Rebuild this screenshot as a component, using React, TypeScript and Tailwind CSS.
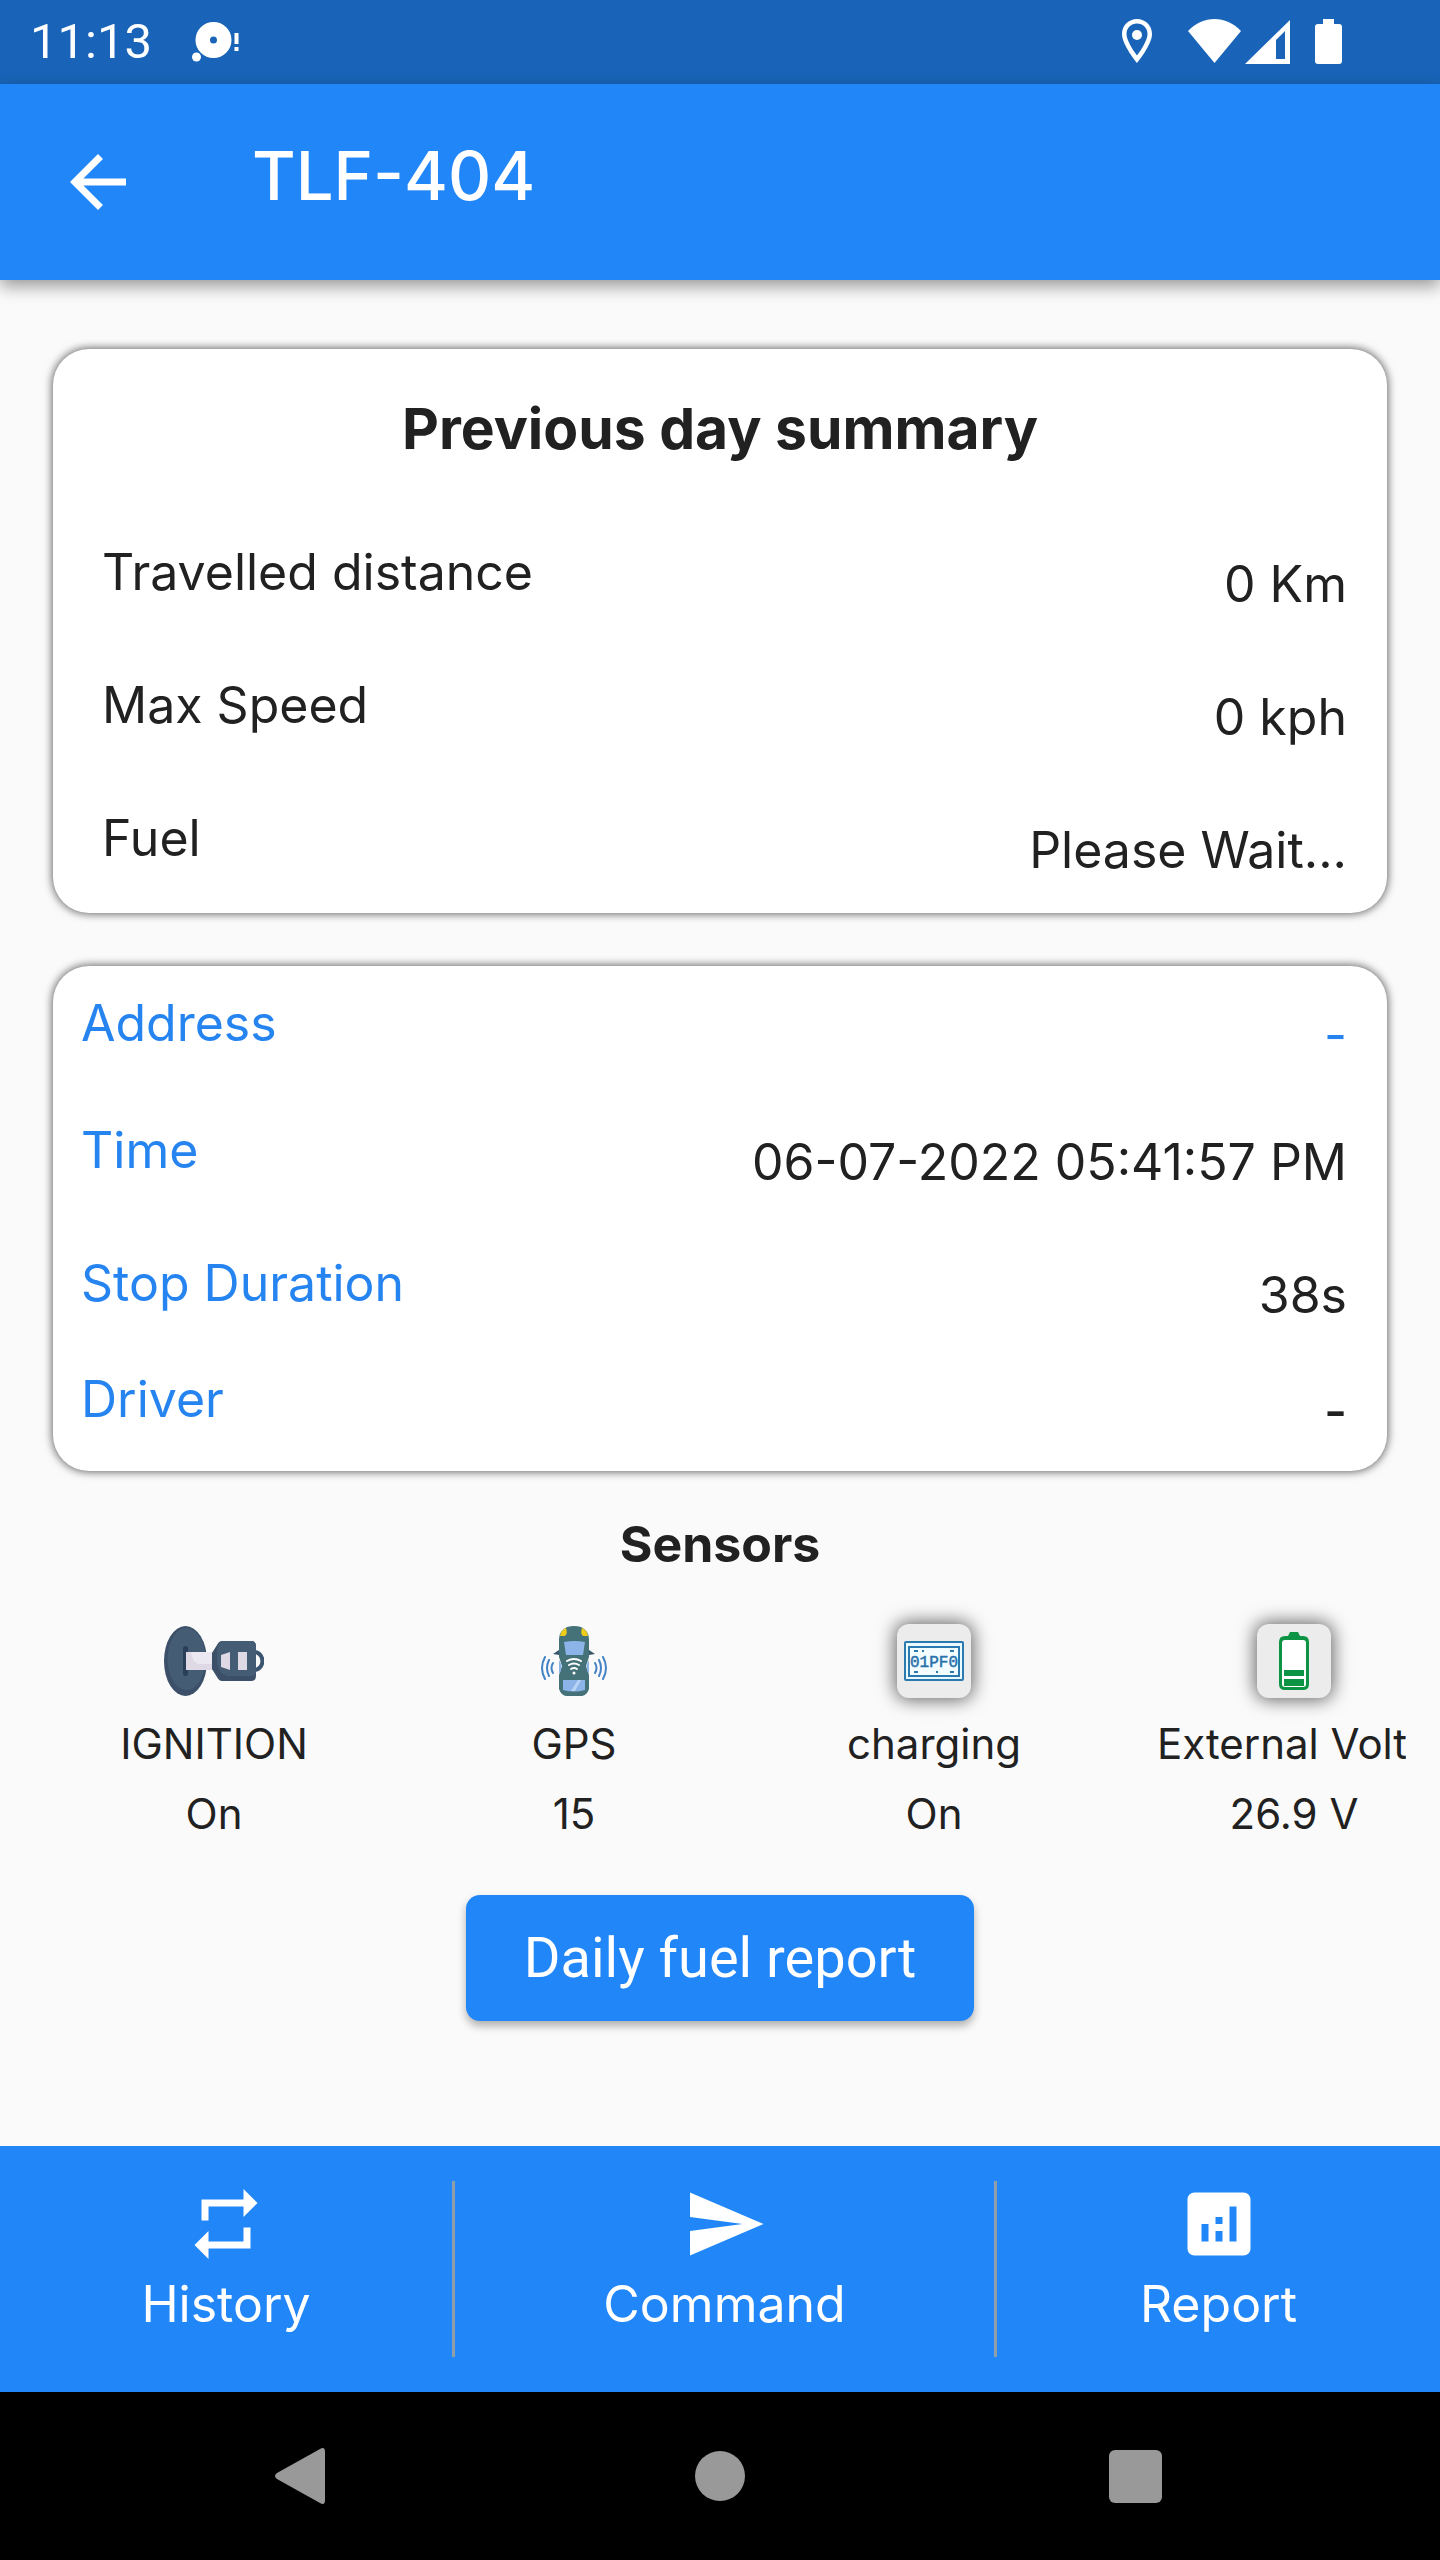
import type { ReactNode } from "react";
import { MdAnalytics, MdArrowBack, MdRepeat, MdSend } from "react-icons/md";

type RowProps = {
  label: string;
  value: string;
};

const summary: RowProps[] = [
  { label: "Travelled distance", value: "0 Km" },
  { label: "Max Speed", value: "0 kph" },
  { label: "Fuel", value: "Please Wait..." },
];

const Card = ({ children }: { children: ReactNode }) => (
  <section className="rounded-[36px] bg-white shadow-[0_0_8px_1px_rgba(0,0,0,0.6)]">
    {children}
  </section>
);

const StatusBar = () => (
  <div className="flex h-[84px] items-center justify-between bg-[#1964b8] pr-[98px] pl-[30px] text-white">
    <div className="flex items-center gap-10">
      <span className="font-[Roboto] text-[49px] leading-[60px]">11:13</span>
      <svg className="h-10 w-12" viewBox="0 0 48 40" fill="currentColor">
        <path
          fillRule="evenodd"
          d="M21.500 0a18 18 0 1 0 0 36a18 18 0 1 0 0-36zm0 14.500a3.500 3.500 0 1 1 0 7a3.500 3.500 0 1 1 0-7z"
        />
        <circle cx="4.500" cy="35" r="4.500" />
        <path d="M42.500 11h4v11h-4zM42.500 25h4v4h-4z" />
      </svg>
    </div>
    <svg className="h-[46px] w-[220px]" viewBox="0 0 220 46" fill="currentColor">
      <path
        fillRule="evenodd"
        d="M15 0C6.700 0 0 6.500 0 15c0 11 15 29 15 29s15-18 15-29C30 6.500 23.300 0 15 0zm0 4.500c6 0 10.500 4.500 10.500 10.500C25.500 21 19.500 30.500 15 36.500C10.500 30.500 4.500 21 4.500 15C4.500 9 9 4.500 15 4.500z"
      />
      <circle cx="15" cy="16" r="5" />
      <path d="M66 12C81-4 104-4 119 12L92.500 44z" />
      <path fillRule="evenodd" d="M168 1v44h-45zM163 12L154 21v19h9z" />
      <path d="M201 0h11v5h5a3 3 0 0 1 3 3v34a3 3 0 0 1-3 3h-21a3 3 0 0 1-3-3V8a3 3 0 0 1 3-3h5z" />
    </svg>
  </div>
);

const AppBar = () => (
  <header className="flex h-[196px] items-center bg-[#2186f7] pl-14 text-white shadow-[0_6px_16px_rgba(0,0,0,0.4)]">
    <button type="button" aria-label="Back">
      <MdArrowBack className="size-[84px]" />
    </button>
    <h1 className="ml-28 pb-3 text-[67px] leading-[84px] font-medium">TLF-404</h1>
  </header>
);

const IgnitionIcon = () => (
  <svg className="h-[70px] w-[100px]" viewBox="0 0 100 70">
    <ellipse cx="21.500" cy="35" rx="21.500" ry="35" fill="#3b5068" />
    <ellipse cx="22.500" cy="33" rx="19" ry="31" fill="#445c74" />
    <rect x="19" y="20" width="5" height="30" rx="2.500" fill="#2b3f59" />
    <path d="M22 26h28v18H22z" fill="#dfd9e6" />
    <path d="M27 26h23v12H34q-6-3-7-12z" fill="#ece8f1" />
    <path d="M90 26a8 8.500 0 0 1 0 18" fill="none" stroke="#3b5570" strokeWidth="4" />
    <path d="M58 15h29q5 0 5 5v30q0 5-5 5H58q-3 0-5-4l-5-8V27l5-8q2-4 5-4z" fill="#3b5068" />
    <path d="M59 15h28q5 0 5 5v26q0 4-5 4H63q-8-3-10-12V22q2-7 6-7z" fill="#445c74" />
    <path d="M57 29l9-3v18l-9-3zM74 26h9v18h-9z" fill="#dfd9e6" />
  </svg>
);

const GpsIcon = () => (
  <svg className="h-[70px] w-[68px]" viewBox="0 0 68 70">
    <path d="M13 28l6-4v5zM55 28l-6-4v5z" fill="#36586a" />
    <path
      d="M27 1q7-2 14 0q8 4 8 12v18l-3 9l3 9v14q-2 6-7 7H26q-5-1-7-7V49l3-9l-3-9V13q0-8 8-12z"
      fill="#457278"
    />
    <path d="M20 10q1-6 6-8q2 5-1 8zM48 10q-1-6-6-8q-2 5 1 8z" fill="#f0cc1a" />
    <path d="M24 16q10-2 21 0l-2 13H26zM23 54h22v10q-11 3-22 0z" fill="#8db4e8" />
    <path d="M31 65l7-11h3l-6 11z" fill="#b9d3f4" />
    <path d="M19 34q5 7 0 14zM49 34q-5 7 0 14z" fill="#8db4e8" />
    <g fill="none" strokeLinecap="round" strokeWidth="2">
      <path d="M27 35q7-4 14 0M29 39q5-3 10 0M31 43q3-2 6 0" stroke="#fff" />
      <path
        d="M5 31q-6 11 0 22M9 34q-4 8 0 16M13 37q-3 5 0 10M63 31q6 11 0 22M59 34q4 8 0 16M55 37q3 5 0 10"
        stroke="#4382c4"
      />
    </g>
    <circle cx="34" cy="47" r="1.500" fill="#fff" />
  </svg>
);

const IconTile = ({ children }: { children: ReactNode }) => (
  <div className="flex size-[74px] items-center justify-center rounded-xl bg-[#ececec] shadow-[0_0_18px_2px_rgba(0,0,0,0.6)]">
    {children}
  </div>
);

const PlateIcon = () => (
  <svg className="h-10 w-[60px]" viewBox="0 0 60 40">
    <rect x="1" y="1" width="58" height="38" rx="1" fill="#e9fbff" stroke="#2a7ab0" strokeWidth="2" />
    <rect x="5" y="6" width="50" height="29" fill="#f3fdff" stroke="#2a7ab0" strokeWidth="2" />
    <path d="M10 10h4M18 10h2M46 10h4M10 31h4M32 31h2M46 31h4" stroke="#2a7ab0" strokeWidth="2" />
    <text
      x="30"
      y="26"
      textAnchor="middle"
      fontFamily="Liberation Mono, monospace"
      fontSize="16"
      fill="#2a72ab"
      stroke="#2a72ab"
      strokeWidth="0.500"
    >
      01PF0
    </text>
  </svg>
);

const VoltIcon = () => (
  <svg className="h-[60px] w-[30px]" viewBox="0 0 30 60">
    <path d="M9 5l2-4h8l2 4h3q6 0 6 6v42q0 6-6 6H6q-6 0-6-6V11q0-6 6-6z" fill="#0c9444" />
    <rect x="3" y="9" width="24" height="47" rx="3" fill="#fff" />
    <path d="M5 39h20v6H5zM5 48h20v7H5z" fill="#0c9444" />
  </svg>
);

const sensors = [
  { label: "IGNITION", value: "On", icon: <IgnitionIcon /> },
  { label: "GPS", value: "15", icon: <GpsIcon /> },
  { label: "charging", value: "On", icon: <IconTile><PlateIcon /></IconTile> },
  { label: "External Volt", value: "26.9 V", icon: <IconTile><VoltIcon /></IconTile> },
];

const DetailRow = ({ label, children }: { label: string; children: ReactNode }) => (
  <div className="flex items-start justify-between">
    <dt className="text-[#2684f0]">{label}</dt>
    <dd className="pt-3">{children}</dd>
  </div>
);

const NavDivider = () => <div className="h-44 bg-[#8f9ea9]" />;

const NavButton = ({ label, icon }: { label: string; icon: ReactNode }) => (
  <button type="button" className="flex flex-col items-center gap-0.5 self-start pt-9 text-[50px] leading-[72px]">
    {icon}
    {label}
  </button>
);

export default function App() {
  return (
    <div className="flex min-h-screen flex-col bg-[#fafafa] font-[Inter,sans-serif] text-[#212121]">
      <StatusBar />
      <AppBar />

      <main className="flex flex-1 flex-col pt-[69px]">
        <div className="flex flex-col gap-[53px] px-[53px]">
          <Card>
            <h2 className="pt-10 text-center text-[57px] leading-[80px] font-bold">
              Previous day summary
            </h2>
            <dl className="mt-[67px] flex flex-col gap-[49px] pr-10 pb-[27px] pl-[49px] text-[50px] leading-[72px]">
              {summary.map((row) => (
                <div key={row.label} className="flex items-start justify-between">
                  <dt>{row.label}</dt>
                  <dd className="pt-3">{row.value}</dd>
                </div>
              ))}
            </dl>
          </Card>

          <Card>
            <dl className="flex flex-col pt-[21px] pr-10 pb-6 pl-7 text-[50px] leading-[72px]">
              <DetailRow label="Address">
                <span className="text-[#2684f0]">-</span>
              </DetailRow>
              <div className="mt-[43px]">
                <DetailRow label="Time">06-07-2022 05:41:57 PM</DetailRow>
              </div>
              <div className="mt-[49px]">
                <DetailRow label="Stop Duration">38s</DetailRow>
              </div>
              <div className="mt-8">
                <DetailRow label="Driver">
                  <span className="font-medium">-</span>
                </DetailRow>
              </div>
            </dl>
          </Card>
        </div>

        <h2 className="mt-[35px] text-center text-[50px] leading-[76px] font-bold">Sensors</h2>
        <ul className="mx-[34px] flex overflow-hidden pt-[31px]">
          {sensors.map((sensor) => (
            <li
              key={sensor.label}
              className="flex w-[360px] shrink-0 flex-col items-center text-[42px] leading-[70px] whitespace-nowrap last:[&>.label]:pr-6"
            >
              <div className="flex h-24 items-center">{sensor.icon}</div>
              <span className="label">{sensor.label}</span>
              <span>{sensor.value}</span>
            </li>
          ))}
        </ul>

        <button
          type="button"
          className="mt-[46px] mb-16 self-center rounded-[14px] bg-[#2186f7] px-[58px] py-[27px] font-[Roboto] text-[56px] leading-[72px] text-white shadow-[0_5px_8px_rgba(0,0,0,0.3)]"
        >
          Daily fuel report
        </button>
      </main>

      <nav className="grid h-[246px] grid-cols-[452fr_3px_539fr_3px_443fr] items-center justify-items-stretch bg-[#2186f7] text-white">
        <NavButton label="History" icon={<MdRepeat className="size-[84px]" />} />
        <NavDivider />
        <NavButton label="Command" icon={<MdSend className="size-[84px]" />} />
        <NavDivider />
        <NavButton label="Report" icon={<MdAnalytics className="size-[84px]" />} />
      </nav>

      <div className="grid h-[168px] grid-cols-[1fr_240px_1fr] items-center bg-black text-[#999]">
        <button type="button" aria-label="Back" className="justify-self-center">
          <svg className="h-14 w-[50px]" viewBox="0 0 50 56" fill="currentColor">
            <path d="M45 1q5-3 5 3v48q0 6-5 3L2 31q-4-3 0-6z" />
          </svg>
        </button>
        <button type="button" aria-label="Home" className="size-[50px] justify-self-center rounded-full bg-[#999]" />
        <button type="button" aria-label="Recent apps" className="mr-2.5 size-[53px] justify-self-center rounded-md bg-[#999]" />
      </div>
    </div>
  );
}
